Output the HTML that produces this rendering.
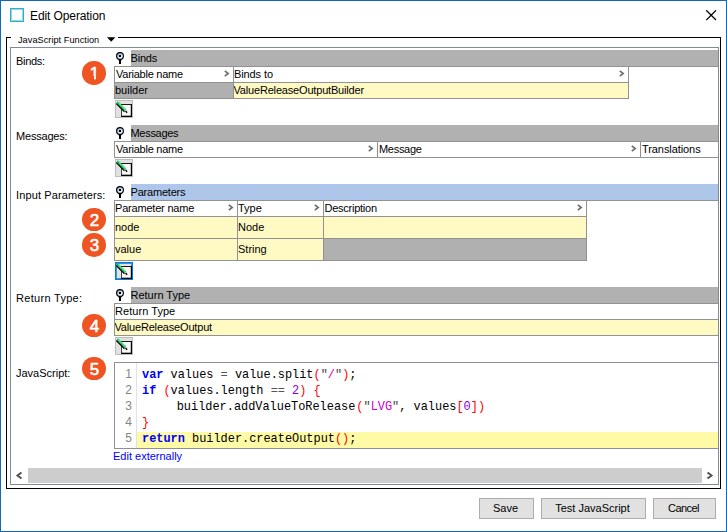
<!DOCTYPE html>
<html lang="en">
<head>
<meta charset="utf-8">
<title>Edit Operation</title>
<style>
html,body{margin:0;padding:0;background:#fff;}
body{width:727px;height:532px;position:relative;overflow:hidden;font-family:"Liberation Sans",sans-serif;font-size:11px;color:#000;}
.a{position:absolute;white-space:nowrap;}
.t{position:absolute;white-space:nowrap;line-height:16px;height:16px;}
#win{left:0;top:0;width:725px;height:530px;border:1px solid #1468b9;}
#ticon{left:10px;top:8px;width:12px;height:12px;border:1px solid #2ab2c9;box-shadow:inset 0 0 0 1px rgba(42,178,201,.5);}
#title{left:30px;top:8px;font-size:12px;letter-spacing:-0.1px;}
#group{left:6px;top:37px;width:713px;height:450px;border:1px solid #000;}
#glabel{left:11px;top:32px;width:107px;height:12px;background:#fff;}
#gtext{left:18px;top:34px;font-size:9.2px;line-height:12px;letter-spacing:0.03px;}
#panel{left:10px;top:47px;width:707px;height:436px;border:1px solid #838b96;overflow:hidden;}
.bar{position:absolute;left:131px;width:587px;height:16px;background:#b1b1b1;}
.bar.sel{background:#adc6e9;}
.lbl{left:16px;}
.g{position:absolute;background:#929292;}
.c{position:absolute;}
.y{background:#fff9c4;}
.gr{background:#b0b0b0;}
.badge{position:absolute;left:82.3px;width:23.4px;height:23.4px;border-radius:50%;background:#ef5423;color:#fff;font-weight:normal;-webkit-text-stroke:0.6px #fff;font-size:17px;line-height:25.4px;text-align:center;text-indent:1.2px;}
.fp{position:absolute;top:15px;height:4.5px;width:4.1px;background:#ef5423;}
.btn{position:absolute;box-sizing:border-box;height:21px;top:498px;background:#e1e1e1;border:1px solid #adadad;text-align:center;line-height:18px;padding-right:2px;}
.eb{position:absolute;left:115px;width:18px;height:18px;}
.ln{position:absolute;left:115px;width:17px;text-align:right;color:#858585;line-height:16px;height:16px;font-size:12px;}
.code{position:absolute;left:142px;font-family:"Liberation Mono",monospace;font-size:11.92px;line-height:16px;height:16px;white-space:pre;color:#000;}
.k{color:#0000ff;font-weight:bold;}
.p{color:#ff0000;}
.s{color:#cc00cc;}
.q{color:#444;}
.o{color:#555;}
.n{color:#8000e0;}
</style>
</head>
<body>
<svg width="0" height="0" style="position:absolute">
 <defs>
  <linearGradient id="pg" x1="0" y1="0" x2="1" y2="1"><stop offset="0.15" stop-color="#8fa9cc"/><stop offset="0.55" stop-color="#d4e2f2"/><stop offset="0.9" stop-color="#ffffff"/></linearGradient>
  <g id="pin">
   <circle cx="4" cy="4" r="3.4" fill="url(#pg)" stroke="#000" stroke-width="1.15"/>
   <rect x="3" y="3" width="2" height="2" fill="#000"/>
   <rect x="2.3" y="7.3" width="3.4" height="1" fill="#000"/>
   <rect x="3" y="7.6" width="2" height="4.4" fill="#000"/>
  </g>
  <g id="chev">
   <path d="M0.8 0.8 L4.2 3.5 L0.8 6.2" fill="none" stroke="#6e6e6e" stroke-width="1.7"/>
  </g>
  <g id="edit">
   <rect x="6" y="4" width="11" height="13" fill="#f7f7f7"/>
   <rect x="6.2" y="4" width="0.8" height="13" fill="#1a1a1a"/>
   <rect x="6.2" y="4" width="10.8" height="1" fill="#1a1a1a"/>
   <rect x="15.8" y="4" width="1.2" height="13" fill="#000"/>
   <rect x="6.2" y="15.7" width="10.8" height="1.3" fill="#000"/>
   <path d="M1.4 3.5 L9.6 11.7" stroke="#000" stroke-width="1.5"/>
   <path d="M3.0 2.8 L10.2 10.0" stroke="#00b648" stroke-width="2.2" stroke-linecap="round"/>
   <path d="M3.2 2.6 L10.3 9.7" stroke="#9dffbf" stroke-width="0.9"/>
   <path d="M9.2 11.3 L10.9 9.6 L11.7 12 Z" fill="#f6f2e4"/>
   <path d="M10.5 10.9 L12.1 12.8" stroke="#000" stroke-width="1.4"/>
  </g>
 </defs>
</svg>

<!-- window chrome -->
<div id="win" class="a"></div>
<div id="ticon" class="a"></div>
<div id="title" class="t">Edit Operation</div>
<svg class="a" style="left:706px;top:10px" width="11" height="11" viewBox="0 0 11 11"><path d="M0.3 0.3 L10 10 M10 0.3 L0.3 10" stroke="#000" stroke-width="1.25" fill="none"/></svg>

<!-- group box -->
<div id="group" class="a"></div>
<div id="glabel" class="a"></div>
<div id="gtext" class="a">JavaScript Function</div>
<svg class="a" style="left:107px;top:37px" width="9" height="5" viewBox="0 0 9 5"><path d="M0 0.2 H8.4 L4.2 4.7 Z" fill="#000"/></svg>

<div id="panel" class="a"></div>

<!-- ============ Binds ============ -->
<div class="t lbl" style="top:53px;letter-spacing:-0.3px">Binds:</div>
<svg class="a" style="left:116px;top:52px" width="9" height="13"><use href="#pin"/></svg>
<div class="bar" style="top:50px"></div>
<div class="t" style="left:130.5px;top:50px;letter-spacing:-0.2px">Binds</div>
<!-- table -->
<div class="c" style="left:114px;top:66px;width:604px;height:1px;background:#929292"></div>
<div class="c" style="left:114px;top:66px;width:515px;height:33px;background:#929292"></div>
<div class="c" style="left:115px;top:67px;width:118px;height:15px;background:#fff"></div>
<div class="c" style="left:234px;top:67px;width:394px;height:15px;background:#fff"></div>
<div class="c gr" style="left:115px;top:83px;width:118px;height:15px"></div>
<div class="c y" style="left:234px;top:83px;width:394px;height:15px"></div>
<div class="t" style="left:116px;top:66px;letter-spacing:-0.25px">Variable name</div>
<div class="t" style="left:234px;top:66px;letter-spacing:-0.1px">Binds to</div>
<div class="t" style="left:115px;top:82px">builder</div>
<div class="t" style="left:234px;top:82px;width:394px;overflow:hidden;text-indent:-0.5px;letter-spacing:-0.18px">ValueReleaseOutputBuilder</div>
<svg class="a" style="left:224px;top:70px" width="6" height="7"><use href="#chev"/></svg>
<svg class="a" style="left:619px;top:70px" width="6" height="7"><use href="#chev"/></svg>
<div class="eb" style="top:100px;background:#e1e1e1;box-shadow:inset 0 0 0 1px #bcbcbc"><svg width="18" height="18"><use href="#edit"/></svg></div>
<div class="badge" style="top:61.4px">1<div class="fp" style="left:7.2px"></div><div class="fp" style="left:14.2px;width:3.6px"></div></div>

<!-- ============ Messages ============ -->
<div class="t lbl" style="top:128px;letter-spacing:-0.2px">Messages:</div>
<svg class="a" style="left:116px;top:127px" width="9" height="13"><use href="#pin"/></svg>
<div class="bar" style="top:125px"></div>
<div class="t" style="left:130.5px;top:125px;letter-spacing:-0.3px">Messages</div>
<div class="c" style="left:114px;top:141px;width:604px;height:17px;background:#929292"></div>
<div class="c" style="left:115px;top:142px;width:262px;height:15px;background:#fff"></div>
<div class="c" style="left:378px;top:142px;width:262px;height:15px;background:#fff"></div>
<div class="c" style="left:641px;top:142px;width:77px;height:15px;background:#fff"></div>
<div class="t" style="left:116px;top:141px;letter-spacing:-0.25px">Variable name</div>
<div class="t" style="left:379px;top:141px;letter-spacing:-0.3px">Message</div>
<div class="t" style="left:642px;top:141px;letter-spacing:-0.08px">Translations</div>
<svg class="a" style="left:368px;top:145px" width="6" height="7"><use href="#chev"/></svg>
<svg class="a" style="left:631px;top:145px" width="6" height="7"><use href="#chev"/></svg>
<div class="eb" style="top:159px;background:#e1e1e1;box-shadow:inset 0 0 0 1px #bcbcbc"><svg width="18" height="18"><use href="#edit"/></svg></div>

<!-- ============ Input Parameters ============ -->
<div class="t lbl" style="top:187px;letter-spacing:0.12px">Input Parameters:</div>
<svg class="a" style="left:116px;top:186px" width="9" height="13"><use href="#pin"/></svg>
<div class="bar sel" style="top:184px"></div>
<div class="t" style="left:130.5px;top:184px;letter-spacing:-0.2px">Parameters</div>
<div class="c" style="left:114px;top:200px;width:604px;height:1px;background:#929292"></div>
<div class="c" style="left:114px;top:200px;width:473px;height:61px;background:#929292"></div>
<div class="c" style="left:115px;top:201px;width:122px;height:15px;background:#fff"></div>
<div class="c" style="left:238px;top:201px;width:85px;height:15px;background:#fff"></div>
<div class="c" style="left:324px;top:201px;width:262px;height:15px;background:#fff"></div>
<div class="c y" style="left:115px;top:217px;width:122px;height:21px"></div>
<div class="c y" style="left:238px;top:217px;width:85px;height:21px"></div>
<div class="c y" style="left:324px;top:217px;width:262px;height:21px"></div>
<div class="c y" style="left:115px;top:239px;width:122px;height:21px"></div>
<div class="c y" style="left:238px;top:239px;width:85px;height:21px"></div>
<div class="c gr" style="left:324px;top:239px;width:262px;height:21px"></div>
<div class="t" style="left:115px;top:200px;letter-spacing:-0.2px">Parameter name</div>
<div class="t" style="left:238px;top:200px">Type</div>
<div class="t" style="left:324.5px;top:200px;letter-spacing:-0.25px">Description</div>
<div class="t" style="left:115px;top:219px">node</div>
<div class="t" style="left:238px;top:219px">Node</div>
<div class="t" style="left:115px;top:241px">value</div>
<div class="t" style="left:238px;top:241px">String</div>
<svg class="a" style="left:228px;top:204px" width="6" height="7"><use href="#chev"/></svg>
<svg class="a" style="left:314px;top:204px" width="6" height="7"><use href="#chev"/></svg>
<svg class="a" style="left:577px;top:204px" width="6" height="7"><use href="#chev"/></svg>
<div class="eb" style="top:262px;background:#e3e3e3;box-shadow:inset 0 0 0 1px #0a78d7, inset 0 0 0 2px rgba(10,120,215,.75)"><svg width="18" height="18"><use href="#edit"/></svg></div>
<div class="badge" style="top:208.1px">2</div>
<div class="badge" style="top:233.2px">3</div>

<!-- ============ Return Type ============ -->
<div class="t lbl" style="top:290px;letter-spacing:0.3px">Return Type:</div>
<svg class="a" style="left:116px;top:289px" width="9" height="13"><use href="#pin"/></svg>
<div class="bar" style="top:287px"></div>
<div class="t" style="left:130.5px;top:287px">Return Type</div>
<div class="c" style="left:114px;top:303px;width:604px;height:33px;background:#929292"></div>
<div class="c" style="left:115px;top:304px;width:603px;height:15px;background:#fff"></div>
<div class="c y" style="left:115px;top:320px;width:603px;height:15px"></div>
<div class="t" style="left:115px;top:303px;letter-spacing:0.05px">Return Type</div>
<div class="t" style="left:115px;top:319px;width:300px;overflow:hidden;text-indent:-0.5px;letter-spacing:-0.18px">ValueReleaseOutput</div>
<div class="eb" style="top:337px;background:#e1e1e1;box-shadow:inset 0 0 0 1px #bcbcbc"><svg width="18" height="18"><use href="#edit"/></svg></div>
<div class="badge" style="top:313.5px">4</div>

<!-- ============ JavaScript ============ -->
<div class="t lbl" style="top:365px">JavaScript:</div>
<div class="c" style="left:114px;top:362px;width:604px;height:87px;background:#8c9098"></div>
<div class="c" style="left:115px;top:363px;width:603px;height:85px;background:#fff"></div>
<div class="c" style="left:136px;top:363px;width:1px;height:85px;background:#e2e2e2"></div>
<div class="c" style="left:137px;top:432px;width:581px;height:16px;background:#fffaa5"></div>
<div class="ln" style="top:366px">1</div>
<div class="ln" style="top:382px">2</div>
<div class="ln" style="top:398px">3</div>
<div class="ln" style="top:414px">4</div>
<div class="ln" style="top:430px">5</div>
<div class="code" style="top:367px"><span class="k">var</span> values <span class="o">=</span> value.split<span class="p">(</span><span class="q">"</span><span class="s">/</span><span class="q">"</span><span class="p">)</span>;</div>
<div class="code" style="top:383px"><span class="k">if</span> <span class="p">(</span>values.length <span class="o">==</span> <span class="n">2</span><span class="p">)</span> <span class="p">{</span></div>
<div class="code" style="top:399px"><span style="position:relative;left:-1px">     builder.addValueToRelease</span><span class="p">(</span><span class="q">"</span><span class="s">LVG</span><span class="q">"</span>, values<span class="p">[</span><span class="n">0</span><span class="p">])</span></div>
<div class="code" style="top:415px"><span class="p">}</span></div>
<div class="code" style="top:431px"><span class="k">return</span> builder.createOutput<span class="p">()</span>;</div>
<div class="t" style="left:113px;top:448px;color:#0000ff">Edit externally</div>
<div class="badge" style="top:356.7px">5</div>

<!-- scrollbar -->
<div class="c" style="left:28px;top:468px;width:674px;height:15px;background:#cdcdcd"></div>
<svg class="a" style="left:15px;top:471px" width="8" height="9" viewBox="0 0 8 9"><path d="M6.5 1.4 L2.4 4.5 L6.5 7.6" fill="none" stroke="#505050" stroke-width="1.9"/></svg>
<svg class="a" style="left:706px;top:471px" width="8" height="9" viewBox="0 0 8 9"><path d="M1.5 1.4 L5.6 4.5 L1.5 7.6" fill="none" stroke="#505050" stroke-width="1.9"/></svg>

<!-- re-draw panel right border over clipped content -->
<div class="c" style="left:718px;top:47px;width:1px;height:438px;background:#838b96"></div>

<!-- buttons -->
<div class="btn" style="left:479px;width:55px">Save</div>
<div class="btn" style="left:541px;width:105px">Test JavaScript</div>
<div class="btn" style="left:653px;width:63px;letter-spacing:-0.55px">Cancel</div>
</body>
</html>
